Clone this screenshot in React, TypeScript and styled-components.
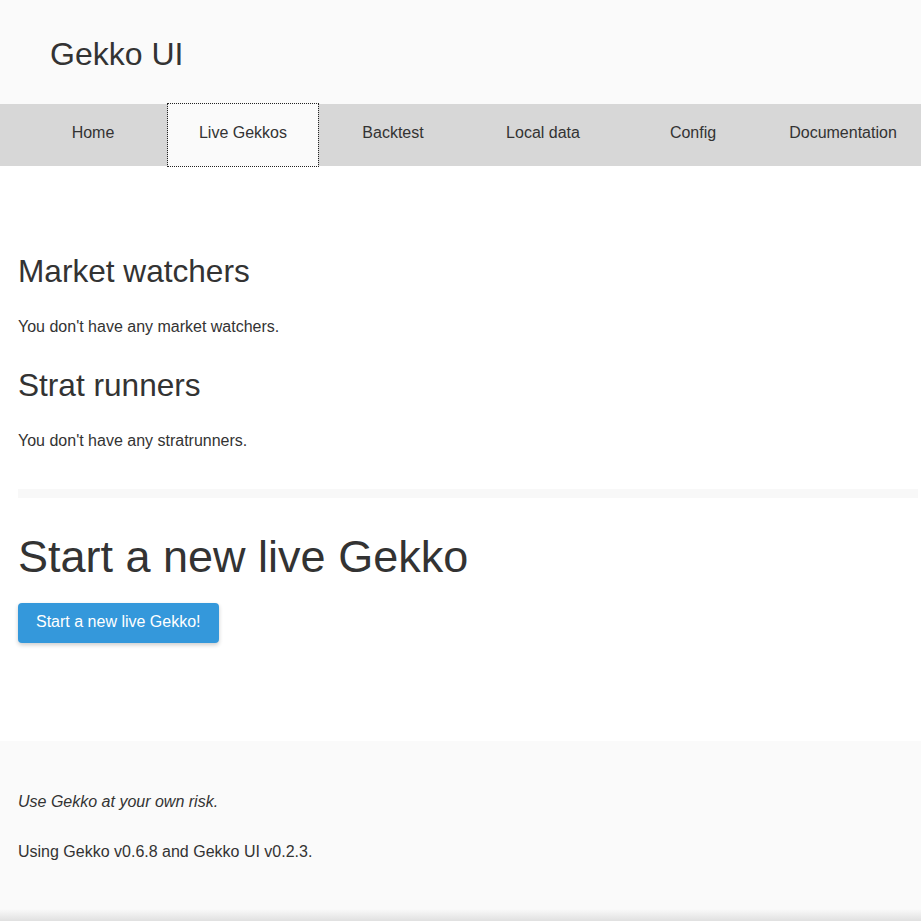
import styled, { createGlobalStyle } from 'styled-components';

const GlobalStyle = createGlobalStyle`
  html, body {
    margin: 0;
    padding: 0;
    background: #fff;
    color: #333;
    font-family: "Liberation Sans", Arial, Helvetica, sans-serif;
  }
`;

const tabs = ['Home', 'Live Gekkos', 'Backtest', 'Local data', 'Config', 'Documentation'];

const App = () => {
  return (
    <>
      <GlobalStyle />
      <Header>
        <Brand>Gekko UI</Brand>
      </Header>
      <Nav>
        <TabList>
          {tabs.map((tab) => (
            <Tab key={tab} $active={tab === 'Live Gekkos'}>
              {tab}
            </Tab>
          ))}
        </TabList>
      </Nav>
      <Content>
        <Heading>Market watchers</Heading>
        <Text>You don't have any market watchers.</Text>
        <Heading>Strat runners</Heading>
        <Text>You don't have any stratrunners.</Text>
        <Divider />
        <BigHeading>Start a new live Gekko</BigHeading>
        <Button>Start a new live Gekko!</Button>
      </Content>
      <Footer>
        <FooterText $italic>Use Gekko at your own risk.</FooterText>
        <FooterText>Using Gekko v0.6.8 and Gekko UI v0.2.3.</FooterText>
      </Footer>
    </>
  );
};

export default App;

const Header = styled.header`
  height: 104px;
  box-sizing: border-box;
  display: flex;
  align-items: center;
  padding: 3px 50px 0;
  background-color: #fafafa;
`;

const Brand = styled.h1`
  margin: 0;
  font-size: 32px;
  font-weight: 400;
  line-height: 38px;
  color: #333;
`;

const Nav = styled.nav`
  height: 62px;
  background-color: #d7d7d7;
`;

const TabList = styled.div`
  display: flex;
  height: 100%;
  margin-left: 18px;
`;

const Tab = styled.a<{ $active?: boolean }>`
  width: 150px;
  display: flex;
  align-items: center;
  justify-content: center;
  padding-bottom: 4px;
  font-size: 16px;
  color: #333;
  cursor: pointer;
  box-sizing: border-box;
  background-color: ${(p) => (p.$active ? '#fafafa' : 'transparent')};
  outline: ${(p) => (p.$active ? '1px dotted #222' : 'none')};
  outline-offset: 0;
`;

const Content = styled.main`
  width: 900px;
  margin: 0 18px;
  padding-top: 86px;
  padding-bottom: 98px;
`;

const Heading = styled.h3`
  margin: 0 0 25px;
  font-size: 31.6px;
  font-weight: 400;
  line-height: 38px;
`;

const Text = styled.p`
  margin: 0 0 27px;
  font-size: 16px;
  line-height: 24px;
`;

const Divider = styled.hr`
  margin: 36px 0 32px;
  height: 9px;
  border: none;
  background-color: #f8f8f8;
`;

const BigHeading = styled.h2`
  margin: 0 0 19px;
  font-size: 45px;
  font-weight: 400;
  line-height: 54px;
`;

const Button = styled.button`
  display: block;
  height: 40px;
  padding: 0 18px 2px;
  border: none;
  border-radius: 4px;
  background-color: #3498db;
  color: #fff;
  font-family: inherit;
  font-size: 16px;
  box-shadow: 0 2px 4px rgba(0, 0, 0, 0.2);
  cursor: pointer;
`;

const Footer = styled.footer`
  height: 180px;
  box-sizing: border-box;
  padding: 49px 18px 0;
  background: linear-gradient(to bottom, #fafafa calc(100% - 12px), #e0e0e0);
`;

const FooterText = styled.p<{ $italic?: boolean }>`
  margin: 0 0 26px;
  font-size: 16px;
  line-height: 24px;
  font-style: ${(p) => (p.$italic ? 'italic' : 'normal')};
`;
